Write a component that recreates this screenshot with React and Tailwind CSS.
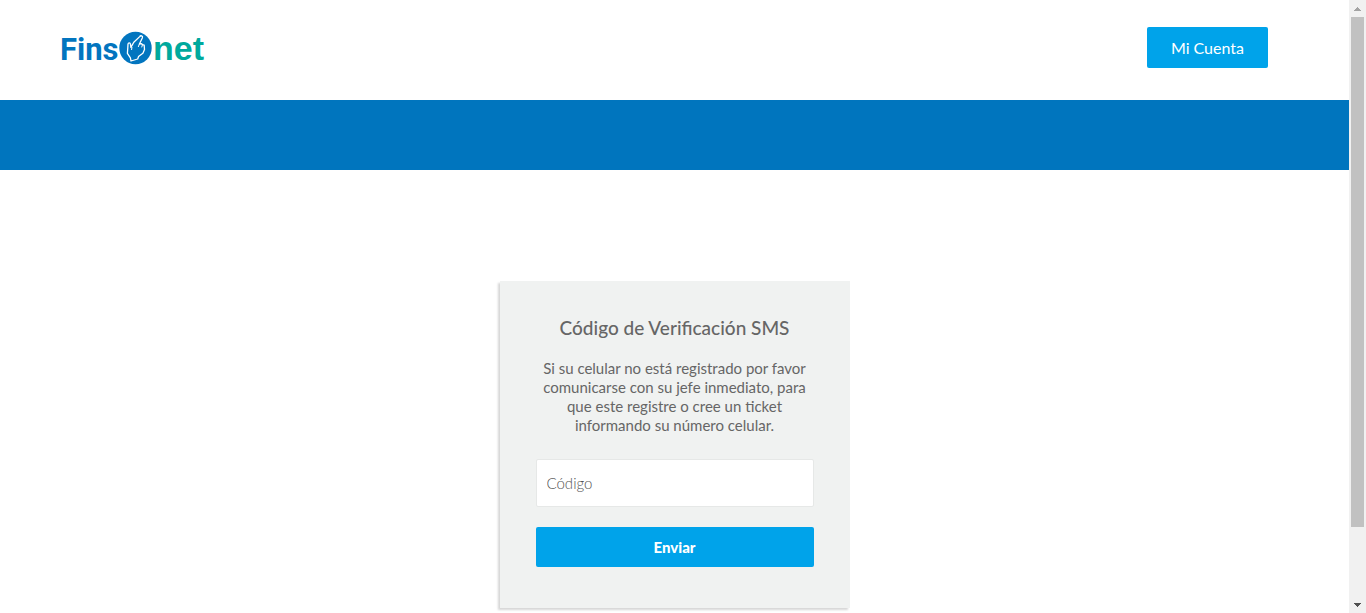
import React from "react";

function Logo() {
  return (
    <a href="#inicio" aria-label="Finsonet" className="block">
      <svg width="150" height="48" viewBox="0 0 150 48" role="img" aria-label="Finsonet">
        <text x="-1" y="36" fontSize="31" fontWeight="700" fill="#0275bf" fontFamily="Roboto, sans-serif">
          Fins
        </text>
        <circle cx="74.5" cy="24" r="16.2" fill="#0275bf" />
        <path
          d="M78.7 12.6c.9-1.5 3.4-.7 2.7 1.2L78.4 20l1.8-.4 1.4 1 1.6.6.3 4.4-1.6 3.6-4.4 3.4-.8 2.4-6.7 2-.6-3.2-3-4.4.4-5.6.2-3.8c.3-1.7 2.3-1.5 2.4 0l.5 3.4 2.9-5.2z"
          fill="none"
          stroke="#ffffff"
          strokeWidth="1.3"
          strokeLinejoin="round"
        />
        <path d="M70.9 23.4l-.3 2.2M78.4 20l-1 2.6M81.4 20.8l-.6 2.2" fill="none" stroke="#ffffff" strokeWidth="1" strokeLinecap="round" />
        <text x="92" y="36" fontSize="34" fontWeight="700" fill="#00a99d" fontFamily="'Liberation Sans', Arial, sans-serif">
          net
        </text>
      </svg>
    </a>
  );
}

function PageScrollbar() {
  return (
    <div aria-hidden="true" className="sticky top-0 flex h-screen w-[17px] shrink-0 flex-col bg-[#f1f1f1]">
      <div className="flex h-[17px] items-center justify-center">
        <svg width="7" height="4" viewBox="0 0 7 4" shapeRendering="crispEdges">
          <path d="M3 0h1v1h1v1h1v1h1v1H0V3h1V2h1V1h1z" fill="#a3a3a3" />
        </svg>
      </div>
      <div className="flex-1 px-[2px]">
        <div className="h-[88%] bg-[#c1c1c1]" />
      </div>
      <div className="flex h-[17px] items-center justify-center">
        <svg width="7" height="4" viewBox="0 0 7 4" shapeRendering="crispEdges">
          <path d="M0 0h7v1H6v1H5v1H4v1H3V3H2V2H1V1H0z" fill="#505050" />
        </svg>
      </div>
    </div>
  );
}

export default function App() {
  return (
    <div className="flex min-h-screen bg-white font-['Lato','Open_Sans',sans-serif] text-[#666666]">
      <div className="min-w-0 flex-1">
        <header className="flex h-[100px] items-center justify-between pb-[5px] pl-[61px] pr-[81px]">
          <Logo />
          <button type="button" className="h-[41px] rounded-[2px] bg-[#00a3ea] px-6 text-[16px] text-white">
            Mi Cuenta
          </button>
        </header>
        <div className="h-[70px] bg-[#0075be]" />
        <main className="flex justify-center pt-[111px]">
          <form
            onSubmit={(event) => event.preventDefault()}
            className="w-[350px] bg-[#f0f2f1] px-9 pb-[41px] pt-[35px] text-center shadow-[-2px_2px_2px_rgba(0,0,0,0.16)]"
          >
            <h1 className="text-[19px] font-medium leading-6">Código de Verificación SMS</h1>
            <p className="mt-[19px] text-[15px] leading-[19px]">
              Si su celular no está registrado por favor comunicarse con su jefe inmediato, para que este registre o
              cree un ticket informando su número celular.
            </p>
            <input
              type="text"
              name="codigo"
              aria-label="Código"
              placeholder="Código"
              className="mt-6 block h-12 w-full rounded-[2px] border border-[#e6e8e7] bg-white px-[10px] text-[15px] font-light outline-none placeholder:text-[#555555]"
            />
            <button type="submit" className="mt-5 block h-10 w-full rounded-[2px] bg-[#00a3ea] text-[15px] font-black text-white">
              Enviar
            </button>
          </form>
        </main>
      </div>
      <PageScrollbar />
    </div>
  );
}
